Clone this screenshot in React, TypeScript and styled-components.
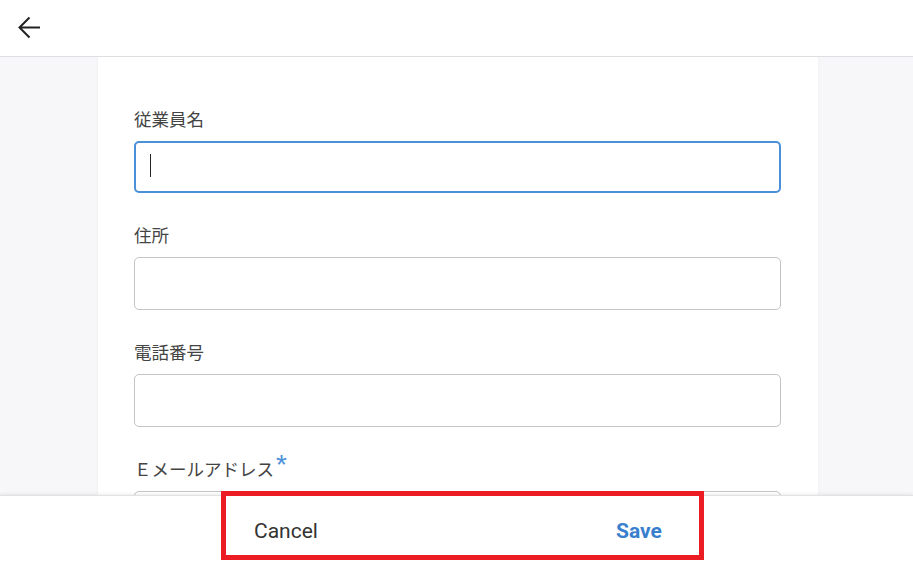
import React from "react";
import styled, { createGlobalStyle, css } from "styled-components";

const GlobalStyle = createGlobalStyle`
  html, body { margin: 0; padding: 0; height: 100%; }
  body { font-family: "Noto Sans CJK JP", "Noto Sans", sans-serif; background: #fff; }
  #root { height: 100%; }
  * { box-sizing: border-box; }
`;

const Page = styled.div`
  height: 562px;
  display: flex;
  flex-direction: column;
  overflow: hidden;
`;

const Header = styled.header`
  height: 57px;
  flex: none;
  display: flex;
  align-items: center;
  padding-left: 18px;
  padding-bottom: 1px;
  border-bottom: 1px solid #dedee3;
  background: #fff;
`;

const BackButton = styled.button`
  border: none;
  background: none;
  padding: 0;
  width: 24px;
  height: 24px;
  display: flex;
  align-items: center;
  justify-content: center;
  cursor: pointer;
  color: #222;
`;

const Main = styled.main`
  flex: 1;
  min-height: 0;
  overflow: hidden;
  background: #f7f7f9;
  display: flex;
  justify-content: center;
  padding-left: 3px;
`;

const Card = styled.section`
  width: 720px;
  background: #fff;
  padding: 50px 37px 0 36px;
  box-shadow: 0 0 2px rgba(0, 0, 0, 0.06);
  display: flex;
  flex-direction: column;
  gap: 30px;
`;

const Field = styled.div`
  display: flex;
  flex-direction: column;
  gap: 10px;
`;

const Label = styled.label`
  font-size: 17.5px;
  line-height: 24px;
  color: #444;
  display: flex;
  align-items: flex-start;
`;

const Required = styled.span`
  color: #4a90d9;
  font-family: "Liberation Sans", sans-serif;
  font-size: 28px;
  line-height: 20px;
  margin-left: 2px;
  margin-top: -2px;
`;

const InputWrap = styled.div`
  position: relative;
`;

const Input = styled.input<{ $focused?: boolean }>`
  width: 100%;
  height: 53px;
  border: 1px solid #c3c3c8;
  border-radius: 5px;
  padding: 0 15px;
  font-size: 16px;
  font-family: inherit;
  outline: none;
  background: #fff;
  ${(p) =>
    p.$focused &&
    css`
      height: 52px;
      border: 2px solid #4a90d9;
      padding: 0 14px;
    `}
`;

const Caret = styled.span`
  position: absolute;
  left: 16px;
  top: 13px;
  width: 1px;
  height: 23px;
  background: #222;
`;

const Footer = styled.footer`
  height: 67px;
  flex: none;
  background: #fff;
  border-top: 1px solid #e2e2e2;
  box-shadow: 0 -1px 3px rgba(0, 0, 0, 0.08);
  display: flex;
  justify-content: center;
  position: relative;
  z-index: 1;
`;

const ButtonGroup = styled.div`
  width: 483px;
  height: 69px;
  margin-top: -5px;
  margin-left: 12px;
  border: 5px solid #ec1c24;
  display: flex;
  justify-content: space-between;
  align-items: center;
`;

const FooterButton = styled.button<{ $primary?: boolean }>`
  width: 120px;
  height: 48px;
  border: none;
  background: none;
  font-family: Roboto, "Liberation Sans", sans-serif;
  font-size: 21px;
  cursor: pointer;
  color: ${(p) => (p.$primary ? "#3a7fcd" : "#333")};
  font-weight: ${(p) => (p.$primary ? 700 : 400)};
  margin-top: 10px;
  padding: 0;
`;

const fields = [
  { label: "従業員名", focused: true },
  { label: "住所" },
  { label: "電話番号" },
  { label: "Ｅメールアドレス", required: true },
];

export default function App() {
  return (
    <>
      <GlobalStyle />
      <Page>
        <Header>
          <BackButton aria-label="back">
            <svg width="24" height="24" viewBox="0 0 24 24" fill="none">
              <path
                d="M22 11.5H2M11.5 1.5L1.5 11.5L11.5 21.5"
                stroke="currentColor"
                strokeWidth="2"
              />
            </svg>
          </BackButton>
        </Header>
        <Main>
          <Card>
            {fields.map((f) => (
              <Field key={f.label}>
                <Label>
                  {f.label}
                  {f.required && <Required>*</Required>}
                </Label>
                <InputWrap>
                  <Input $focused={f.focused} />
                  {f.focused && <Caret />}
                </InputWrap>
              </Field>
            ))}
          </Card>
        </Main>
        <Footer>
          <ButtonGroup>
            <FooterButton>Cancel</FooterButton>
            <FooterButton $primary>Save</FooterButton>
          </ButtonGroup>
        </Footer>
      </Page>
    </>
  );
}
